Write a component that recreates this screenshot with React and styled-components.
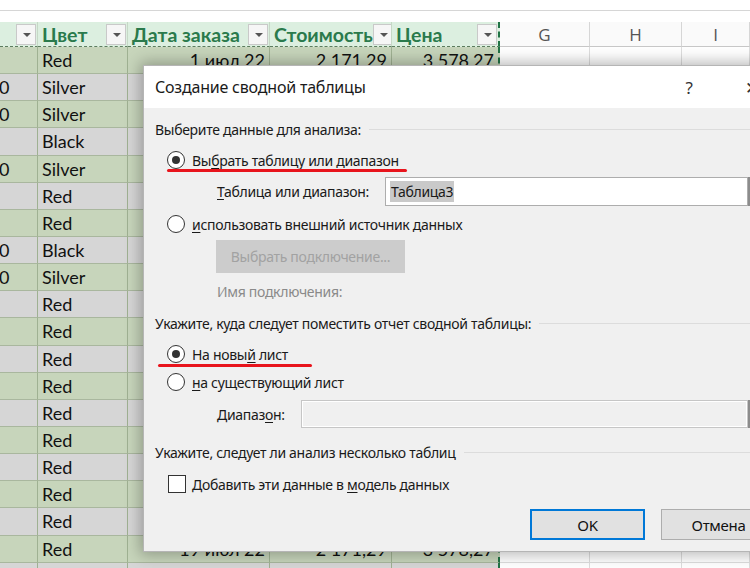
import React from 'react';
import styled, { createGlobalStyle } from 'styled-components';

const GlobalStyle = createGlobalStyle`
  html, body {
    margin: 0;
    padding: 0;
    background: #fff;
  }
  body {
    overflow: hidden;
  }
`;

const colors = [
  'Red', 'Silver', 'Silver', 'Black', 'Silver', 'Red', 'Red', 'Black', 'Silver', 'Red',
  'Red', 'Red', 'Red', 'Red', 'Red', 'Red', 'Red', 'Red', 'Red', 'Red'
];
const zeroRows = [1, 2, 4, 7, 8];

const rows = colors.map((color, i) => ({
  first: zeroRows.includes(i) ? '0' : '',
  color,
  date: `${i + 1} июл 22`,
  cost: '2 171,29',
  price: '3 578,27'
}));

const headers = ['', 'Цвет', 'Дата заказа', 'Стоимость', 'Цена'];

class App extends React.Component {
  render() {
    return (
      <Page>
        <GlobalStyle />
        <Top />
        <Sheet>
          {headers.map((h, i) => (
            <HeadCell key={h + i} $last={i === 4}>
              <span>{h}</span>
              <Drop />
            </HeadCell>
          ))}
          {['G', 'H', 'I'].map(l => (
            <LetterCell key={l}>{l}</LetterCell>
          ))}
          {rows.map((r, i) => {
            const band = i % 2 === 0 ? 'green' : 'gray';
            return (
              <React.Fragment key={i}>
                <DataCell $band={band}><First>{r.first}</First></DataCell>
                <DataCell $band={band}>{r.color}</DataCell>
                <DataCell $band={band} $right>{r.date}</DataCell>
                <DataCell $band={band} $right>{r.cost}</DataCell>
                <DataCell $band={band} $right $last>{r.price}</DataCell>
                <BlankCell />
                <BlankCell />
                <BlankCell />
              </React.Fragment>
            );
          })}
        </Sheet>

        <Dialog>
          <TitleBar>
            <Title>Создание сводной таблицы</Title>
            <Help>?</Help>
            <Close>✕</Close>
          </TitleBar>
          <Body>
            <Section $mt={9}>
              <span>Выберите данные для анализа:</span>
              <Rule />
            </Section>
            <Row $mt={5} $h={28} $pl={12}>
              <Radio $checked />
              <Label>Вы<Key>б</Key>рать таблицу или диапазон</Label>
              <Mark $left={12} $top={23} $width={240} />
            </Row>
            <Row $mt={3} $h={29} $pl={62}>
              <FieldLabel $w={168}><Key>Т</Key>аблица или диапазон:</FieldLabel>
              <Field>
                <Selected>Таблица3</Selected>
              </Field>
              <RefButton />
            </Row>
            <Row $mt={4} $h={28} $pl={12}>
              <Radio />
              <Label><Key>и</Key>спользовать внешний источник данных</Label>
            </Row>
            <Row $mt={2} $h={33} $pl={61}>
              <DisabledButton>Выбрать подключение...</DisabledButton>
            </Row>
            <Row $mt={6} $h={24} $pl={62}>
              <Muted>Имя подключения:</Muted>
            </Row>
            <Section $mt={8}>
              <span>Укажите, куда следует поместить отчет сводной таблицы:</span>
              <Rule />
            </Section>
            <Row $mt={5} $h={28} $pl={12}>
              <Radio $checked />
              <Label>На новы<Key>й</Key> лист</Label>
              <Mark $left={3} $top={24} $width={154} />
            </Row>
            <Row $mt={0} $h={28} $pl={12}>
              <Radio />
              <Label><Key>н</Key>а существующий лист</Label>
            </Row>
            <Row $mt={4} $h={28} $pl={62}>
              <FieldLabel $w={84}>Диапаз<Key>о</Key>н:</FieldLabel>
              <Field $disabled />
              <RefButton />
            </Row>
            <Section $mt={12}>
              <span>Укажите, следует ли анализ несколько таблиц</span>
              <Rule />
            </Section>
            <Row $mt={8} $h={24} $pl={13}>
              <Check />
              <Label>Добавить эти данные в <Key>м</Key>одель данных</Label>
            </Row>
            <Buttons>
              <Button $primary>OK</Button>
              <Button>Отмена</Button>
            </Buttons>
          </Body>
        </Dialog>
      </Page>
    );
  }
}

const Page = styled.div`
  position: relative;
  width: 750px;
  height: 568px;
  overflow: hidden;
  background: #fff;
`;

const Top = styled.div`
  height: 10px;
  border-bottom: 1px solid #d6d6d6;
  margin-bottom: 11px;
`;

const Sheet = styled.div`
  display: grid;
  grid-template-columns: 38px 90px 142px 122px 108px 90px 92px 68px;
  grid-template-rows: 25px;
  grid-auto-rows: 27.15px;
  font-family: Lato, "Liberation Sans", sans-serif;
  font-size: 18px;
  color: #111;
`;

const HeadCell = styled.div`
  display: flex;
  align-items: center;
  justify-content: space-between;
  padding: 0 1px 0 4px;
  background: #dcefe0;
  color: #2a7a4c;
  font-size: 19.5px;
  font-weight: 700;
  border-bottom: 1px dashed #5d7d5f;
  border-right: ${p => (p.$last ? '2px dashed #217346' : '1px solid #c6d8c6')};
  white-space: nowrap;
  overflow: hidden;
`;

const Drop = styled.span`
  flex: none;
  position: relative;
  width: 20px;
  height: 21px;
  background: #f6f6f6;
  border: 1px solid #c9c9c9;
  box-sizing: border-box;

  &::after {
    content: '';
    position: absolute;
    left: 6px;
    top: 8px;
    border-left: 4px solid transparent;
    border-right: 4px solid transparent;
    border-top: 4px solid #555;
  }
`;

const LetterCell = styled.div`
  display: flex;
  align-items: center;
  justify-content: center;
  background: #fafafa;
  color: #555;
  font-family: "Open Sans", "Noto Sans", sans-serif;
  font-size: 17px;
  border-right: 1px solid #d6d6d6;
  border-bottom: 1px solid #c8c8c8;
`;

const DataCell = styled.div`
  display: flex;
  align-items: center;
  justify-content: ${p => (p.$right ? 'flex-end' : 'flex-start')};
  padding: 0 4px;
  background: ${p => (p.$band === 'green' ? '#c7d5bb' : '#d6d6d6')};
  border-right: ${p => (p.$last ? '2px dashed #217346' : '1px solid #9fb192')};
  border-bottom: 1px solid #a9b79e;
  white-space: nowrap;
  overflow: hidden;
`;

const First = styled.span`
  margin-left: -5px;
`;

const BlankCell = styled.div`
  background: #fff;
  border-right: 1px solid #dedede;
  border-bottom: 1px solid #dedede;
`;

const Dialog = styled.div`
  position: absolute;
  left: 143px;
  top: 65px;
  width: 645px;
  height: 487px;
  display: flex;
  flex-direction: column;
  background: #f0f0f0;
  border: 1px solid #b5b5b5;
  box-sizing: border-box;
  box-shadow: 0 0 14px 3px rgba(0, 0, 0, 0.28);
  font-family: "Noto Sans", "Open Sans", sans-serif;
  font-size: 14px;
  letter-spacing: -0.3px;
  color: #1a1a1a;
`;

const TitleBar = styled.div`
  flex: none;
  height: 42px;
  display: flex;
  align-items: center;
  padding: 0 20px 0 11px;
  background: #fff;
`;

const Title = styled.div`
  flex: 1;
  font-size: 16px;
  letter-spacing: -0.2px;
  color: #1a1a1a;
`;

const Help = styled.div`
  width: 40px;
  text-align: center;
  font-size: 17px;
  color: #333;
`;

const Close = styled.div`
  width: 30px;
  margin-left: 28px;
  text-align: center;
  font-size: 17px;
  color: #333;
`;

const Body = styled.div`
  flex: 1;
  display: flex;
  flex-direction: column;
  padding: 0 11px;
`;

const Section = styled.div`
  display: flex;
  align-items: center;
  height: 24px;
  margin-top: ${p => p.$mt}px;
  white-space: nowrap;
`;

const Rule = styled.div`
  flex: 1;
  height: 1px;
  margin-left: 8px;
  background: #dcdcdc;
`;

const Row = styled.div`
  position: relative;
  display: flex;
  align-items: center;
  height: ${p => p.$h}px;
  margin-top: ${p => p.$mt}px;
  padding-left: ${p => p.$pl}px;
  white-space: nowrap;
`;

const Radio = styled.span`
  flex: none;
  position: relative;
  width: 18px;
  height: 18px;
  margin-right: 7px;
  border: 1px solid #333;
  border-radius: 50%;
  background: #fff;
  box-sizing: border-box;

  &::after {
    content: '';
    display: ${p => (p.$checked ? 'block' : 'none')};
    position: absolute;
    left: 4px;
    top: 4px;
    width: 8px;
    height: 8px;
    border-radius: 50%;
    background: #333;
  }
`;

const Check = styled.span`
  flex: none;
  width: 18px;
  height: 18px;
  margin-right: 6px;
  border: 1px solid #333;
  background: #fff;
  box-sizing: border-box;
`;

const Label = styled.span`
  color: #1a1a1a;
`;

const Key = styled.span`
  text-decoration: underline;
  text-underline-offset: 2px;
`;

const Mark = styled.span`
  position: absolute;
  left: ${p => p.$left}px;
  top: ${p => p.$top}px;
  width: ${p => p.$width}px;
  height: 3px;
  border-radius: 2px;
  background: #e8141c;
`;

const FieldLabel = styled.span`
  flex: none;
  width: ${p => p.$w}px;
`;

const Field = styled.div`
  flex: 1;
  height: 100%;
  display: flex;
  align-items: center;
  padding-left: 4px;
  background: ${p => (p.$disabled ? '#f0f0f0' : '#fff')};
  border: 1px solid ${p => (p.$disabled ? '#c6c6c6' : '#adadad')};
  box-shadow: ${p => (p.$disabled ? 'inset 0 0 0 1px #fff' : 'none')};
  box-sizing: border-box;
`;

const Selected = styled.span`
  background: #c9c9c9;
  padding: 1px 1px;
`;

const RefButton = styled.div`
  flex: none;
  width: 28px;
  height: 100%;
  border-left: 2px solid #8c8c8c;
  background: #e1e1e1;
  box-sizing: border-box;
`;

const DisabledButton = styled.div`
  width: 189px;
  height: 33px;
  display: flex;
  align-items: center;
  justify-content: center;
  background: #cccccc;
  color: #a2a2a2;
`;

const Muted = styled.span`
  color: #8a8a8a;
`;

const Buttons = styled.div`
  display: flex;
  justify-content: flex-end;
  gap: 16px;
  margin-top: 13px;
`;

const Button = styled.div`
  width: 115px;
  height: 31px;
  display: flex;
  align-items: center;
  justify-content: center;
  background: #e1e1e1;
  border: ${p => (p.$primary ? '2px solid #0078d7' : '1px solid #adadad')};
  box-sizing: border-box;
  color: #111;
  font-size: 15px;
`;

export default App;
